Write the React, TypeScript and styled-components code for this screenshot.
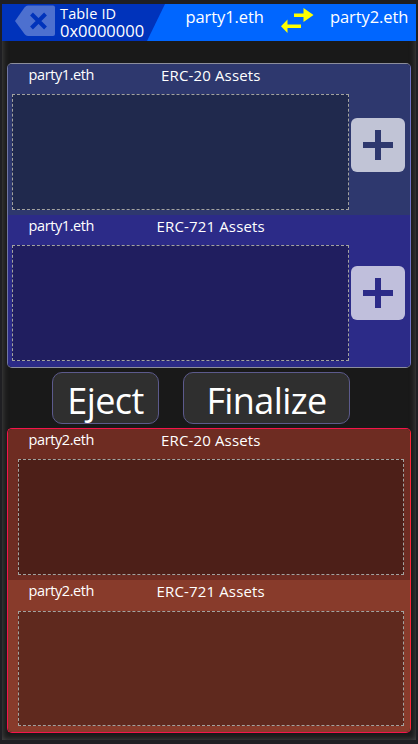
import React from "react";
import styled, { createGlobalStyle } from "styled-components";

const GlobalStyle = createGlobalStyle`
  * { box-sizing: border-box; }
  html, body { margin: 0; padding: 0; background: #1f1f23; }
  body {
    font-family: "Open Sans", "Noto Sans", sans-serif;
    color: #fff;
    overflow: hidden;
  }
  button { font: inherit; color: inherit; padding: 0; cursor: pointer; }
`;

const Page = styled.div`
  width: 418px;
  height: 744px;
  padding: 4px 2px;
  background: #1f1f23;
`;

const Frame = styled.main`
  display: flex;
  flex-direction: column;
  width: 414px;
  height: 736px;
  background: #191919;
  box-shadow: inset 0 0 6px #505050;
`;

const Header = styled.header`
  display: flex;
  flex: none;
  height: 37px;
  margin-bottom: 22px;
  background: #0066ff;
`;

const TableInfo = styled.div`
  display: flex;
  width: 163px;
  height: 37px;
  padding-left: 12px;
  background: #0033bb;
  clip-path: polygon(0 0, 100% 0, 145px 100%, 0 100%);
`;

const BackButton = styled.button`
  width: 42px;
  height: 33px;
  border: 0;
  background: none;
  svg { display: block; }
`;

const TableLabel = styled.div`
  margin-left: 4px;
  padding-top: 1px;
  white-space: nowrap;
`;

const Line = styled.div<{ $size: number; $spacing: number; $height: number }>`
  height: ${(p) => p.$height}px;
  line-height: ${(p) => p.$height}px;
  font-size: ${(p) => p.$size}px;
  letter-spacing: ${(p) => p.$spacing}px;
`;

const Parties = styled.div`
  display: flex;
  margin-left: 20.5px;
  svg { flex: none; display: block; }
`;

const PartyName = styled.div`
  width: 79.5px;
  height: 26px;
  line-height: 26px;
  font-size: 16.5px;
  letter-spacing: -0.1px;
  white-space: nowrap;
`;

const Panel = styled.section<{ $tone: Tone }>`
  flex: none;
  width: 404px;
  height: 305px;
  margin-left: 5px;
  border: 1px solid;
  border-color: ${(p) => (p.$tone === "blue" ? "#8c8e9c #6c72c4 #8c8e9c #7076a4" : "#f5144b #ff2638 #f5144b #f5144b")};
  border-radius: 5px;
  overflow: hidden;
`;

const Group = styled.div<{ $bg: string; $height: number }>`
  height: ${(p) => p.$height}px;
  background: ${(p) => p.$bg};
`;

const GroupHeader = styled.div<{ $height: number }>`
  display: flex;
  height: ${(p) => p.$height}px;
  padding-left: 20.5px;
  white-space: nowrap;
`;

const Owner = styled.span<{ $gap: number }>`
  width: ${(p) => p.$gap}px;
  line-height: 21px;
  font-size: 14.5px;
  letter-spacing: -0.4px;
`;

const Title = styled.span`
  line-height: 23px;
  font-size: 15px;
  letter-spacing: 0.15px;
`;

const Row = styled.div<{ $inset: number }>`
  display: flex;
  padding-left: ${(p) => p.$inset}px;
`;

const DropZone = styled.div<{ $bg: string; $width: number; $height: number }>`
  width: ${(p) => p.$width}px;
  height: ${(p) => p.$height}px;
  border: 1px dashed #a3a3a0;
  background: ${(p) => p.$bg};
`;

const AddButton = styled.button<{ $bg: string; $top: number }>`
  width: 54px;
  height: 54px;
  margin: ${(p) => p.$top}px 0 0 2px;
  border: 0;
  border-radius: 6px;
  background: ${(p) => p.$bg};
  svg { display: block; }
`;

const Actions = styled.div`
  display: flex;
  flex: none;
  gap: 24px;
  height: 60px;
  padding: 4px 0 0 50px;
`;

const Action = styled.button<{ $width: number }>`
  width: ${(p) => p.$width}px;
  height: 52px;
  border: 1px solid #5c5a8c;
  border-radius: 10px;
  background: #2f2f2f;
  line-height: 56px;
  font-size: 36px;
  letter-spacing: -0.6px;
  white-space: nowrap;
`;

type Tone = "blue" | "red";

interface AssetGroup {
  title: string;
  gap: number;
  bg: string;
  zone: string;
  head: number;
  zoneHeight: number;
  add?: { bg: string; fg: string; top: number };
}

const offered: AssetGroup[] = [
  {
    title: "ERC-20 Assets", gap: 132.5, bg: "#2e386e", zone: "#20294d", head: 30, zoneHeight: 116,
    add: { bg: "#c1c4d6", fg: "#2e386e", top: 24 },
  },
  {
    title: "ERC-721 Assets", gap: 128, bg: "#2c2b88", zone: "#201e5f", head: 30, zoneHeight: 116,
    add: { bg: "#c0bfdc", fg: "#2c2b88", top: 21 },
  },
];

const requested: AssetGroup[] = [
  { title: "ERC-20 Assets", gap: 132.5, bg: "#6e2c22", zone: "#4d1f18", head: 30, zoneHeight: 116 },
  { title: "ERC-721 Assets", gap: 128, bg: "#883b2b", zone: "#5f291e", head: 31, zoneHeight: 115 },
];

function AssetPanel({ owner, tone, groups }: { owner: string; tone: Tone; groups: AssetGroup[] }) {
  return (
    <Panel $tone={tone}>
      {groups.map((g, i) => (
        <Group key={g.title} $bg={g.bg} $height={i === 0 ? 151 : 152}>
          <GroupHeader $height={g.head}>
            <Owner $gap={g.gap}>{owner}</Owner>
            <Title>{g.title}</Title>
          </GroupHeader>
          <Row $inset={tone === "blue" ? 4 : 10}>
            <DropZone $bg={g.zone} $width={tone === "blue" ? 337 : 386} $height={g.zoneHeight} />
            {g.add && (
              <AddButton $bg={g.add.bg} $top={g.add.top} aria-label={`Add ${g.title}`}>
                <svg width="54" height="54" viewBox="0 0 54 54">
                  <path d="M12 27h30M27 12v30" stroke={g.add.fg} strokeWidth="6" />
                </svg>
              </AddButton>
            )}
          </Row>
        </Group>
      ))}
    </Panel>
  );
}

export default function App() {
  return (
    <>
      <GlobalStyle />
      <Page>
        <Frame>
          <Header>
            <TableInfo>
              <BackButton aria-label="Leave table">
                <svg width="42" height="33" viewBox="0 0 42 33">
                  <path d="M1 17L10.5 3.5Q12 1.5 14 1.5H39Q41 1.5 41 3.5V30Q41 32 39 32H14Q12 32 10.5 30Z" fill="#4d70cf" />
                  <path d="M17.5 10L31.5 24M31.5 10L17.5 24" stroke="#0033bb" strokeWidth="4" />
                </svg>
              </BackButton>
              <TableLabel>
                <Line $size={14.5} $spacing={0.15} $height={17}>Table ID</Line>
                <Line $size={16.5} $spacing={0} $height={18}>0x0000000</Line>
              </TableLabel>
            </TableInfo>
            <Parties>
              <PartyName>party1.eth</PartyName>
              <svg width="65" height="37" viewBox="265 4 65 37">
                <path
                  d="M294 13.5H303.5V8L313.5 15L303.5 22V17H294ZM281 26.2L287.5 19.5V24.5H301V28H287.5V33Z"
                  fill="#ffff00"
                />
              </svg>
              <PartyName>party2.eth</PartyName>
            </Parties>
          </Header>
          <AssetPanel owner="party1.eth" tone="blue" groups={offered} />
          <Actions>
            <Action $width={107}>Eject</Action>
            <Action $width={167}>Finalize</Action>
          </Actions>
          <AssetPanel owner="party2.eth" tone="red" groups={requested} />
        </Frame>
      </Page>
    </>
  );
}
